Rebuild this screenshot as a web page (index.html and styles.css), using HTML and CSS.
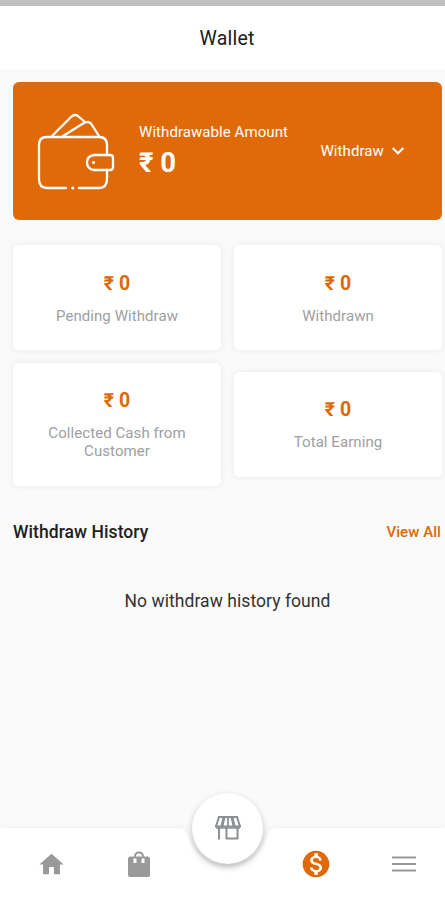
FILE: index.html
```html
<!DOCTYPE html>
<html lang="en">
<head>
<meta charset="utf-8">
<title>Wallet</title>
<link rel="stylesheet" href="styles.css">
</head>
<body>
<div class="app">
  <div class="status"></div>
  <header class="bar"><h1>Wallet</h1></header>
  <main class="content">
    <section class="hero">
      <svg class="wallet" width="78" height="78" viewBox="0 0 78 78" fill="none" stroke="#fff" stroke-width="2.3" stroke-linecap="round" stroke-linejoin="round">
        <path d="M29 75H10Q2 75 2 66V32Q2 24 9.500 24H62Q70 24 70 32V42"/>
        <path d="M70 57V66Q70 75 62 75H42"/>
        <path d="M57 42H73Q76 42 76 45V54Q76 57 73 57H57Q50 56 50 49.500Q50 43 57 42Z"/>
        <path d="M15 23L34 4Q37.500 .5 41 3L48 9M26 23L46 10.500Q52 7 55 12L62 23"/>
        <path d="M56.500 49.500h.1M35.700 75h.1" stroke-width="3"/>
      </svg>
      <div class="balance">
        <span class="balance-label">Withdrawable Amount</span>
        <strong class="balance-value">₹ 0</strong>
      </div>
      <div class="withdraw"><span>Withdraw</span>
        <svg width="12" height="8" viewBox="0 0 12 8" fill="none" stroke="#fff" stroke-width="2"><path d="M.7 1L6 6.300L11.300 1"/></svg>
      </div>
    </section>
    <section class="stats">
      <div class="card"><strong>₹ 0</strong><span>Pending Withdraw</span></div>
      <div class="card"><strong>₹ 0</strong><span>Withdrawn</span></div>
      <div class="card"><strong>₹ 0</strong><span>Collected Cash from<br>Customer</span></div>
      <div class="card"><strong>₹ 0</strong><span>Total Earning</span></div>
    </section>
    <div class="history"><h2>Withdraw History</h2><a>View All</a></div>
    <p class="empty">No withdraw history found</p>
  </main>
  <nav class="nav">
    <svg class="nav-shape" width="445" height="82" viewBox="0 0 445 82"><path d="M0 10H175C184 10 186 13 189 20C195 38 209 49 227.500 49S260 38 266 20C269 13 271 10 280 10H445V82H0Z" fill="#fff"/></svg>
    <div class="nav-items">
      <svg width="29" height="29" viewBox="0 0 24 24" fill="#999"><path d="M10 20v-6h4v6h5v-8h3L12 3 2 12h3v8z"/></svg>
      <svg class="bag" width="28" height="28" viewBox="0 0 28 28" fill="#999"><path fill-rule="evenodd" d="M5.500 6.500H9C9 3.500 11 1.500 14 1.500S19 3.500 19 6.500H22.500Q25 6.500 25 9V25Q25 27 23 27H5Q3 27 3 25V9Q3 6.500 5.500 6.500ZM10.800 6.500H17.200C17 4.500 16 3.500 14 3.500S11 4.500 10.800 6.500ZM8.500 8.500V13H11.500V8.500ZM16.500 8.500V13H19.500V8.500Z"/></svg>
      <span></span>
      <svg width="32" height="32" viewBox="0 0 24 24" fill="#e06a0a"><path d="M12 2C6.480 2 2 6.480 2 12s4.480 10 10 10 10-4.480 10-10S17.520 2 12 2zm1.410 16.090V20h-2.670v-1.930c-1.710-.36-3.160-1.460-3.270-3.400h1.960c.1 1.050.82 1.870 2.650 1.870 1.960 0 2.400-.98 2.400-1.590 0-.83-.44-1.610-2.670-2.140-2.480-.6-4.180-1.620-4.180-3.670 0-1.720 1.390-2.840 3.110-3.210V4h2.670v1.950c1.860.45 2.790 1.860 2.850 3.390H14.300c-.05-1.110-.64-1.870-2.220-1.870-1.500 0-2.400.68-2.400 1.640 0 .84.65 1.390 2.670 1.910s4.180 1.390 4.180 3.910c-.01 1.830-1.380 2.830-3.120 3.160z"/></svg>
      <svg width="24" height="18" viewBox="0 0 24 18" stroke="#999" stroke-width="2"><path d="M0 2.500H24M0 9H24M0 15.500H24"/></svg>
    </div>
    <div class="fab">
      <svg width="26" height="24" viewBox="0 0 26 24" fill="none" stroke="#8c9093" stroke-width="2"><path d="M4 1H22L25 10.500H1ZM4 11V23.500M11.500 11V22.500H22.500V11"/><path d="M9 1L7 10M17 1L19 10" stroke-width="3"/><path d="M13 1V10M1 12H25" stroke-width="1.700"/></svg>
    </div>
  </nav>
</div>
</body>
</html>
```
FILE: styles.css
```css
* { box-sizing: border-box; margin: 0; padding: 0; }
body { font-family: Roboto, sans-serif; color: #202020; background: #fafafa; }
.app { height: 900px; display: flex; flex-direction: column; overflow: hidden; }
.status { height: 6px; background: #c0c0c0; }
.bar { height: 63px; background: #fff; display: flex; align-items: center; justify-content: center; padding: 1px 0 0 9px; }
.bar h1 { font-size: 19.5px; font-weight: 400; letter-spacing: .2px; }
.content { flex: 1; padding: 12.5px 3px 0 13px; }
.hero { height: 138.5px; border-radius: 6px; background: #e06a0a; color: #fff; display: flex; align-items: center; padding: 0 37px 0 24px; }
.wallet { margin-top: 2px; }
.balance { margin-left: 24px; margin-top: 2px; display: flex; flex-direction: column; }
.balance-label { font-size: 15px; line-height: 20px; letter-spacing: .07px; white-space: nowrap; }
.balance-value { font-size: 27.5px; line-height: 36px; margin-top: 3px; }
.withdraw { margin-left: auto; display: flex; align-items: center; gap: 8px; font-size: 15px; letter-spacing: .1px; margin-right: 1px; }
.stats { margin-top: 25px; display: grid; grid-template-columns: 208px 208px; gap: 13px; align-items: center; }
.card { background: #fff; border-radius: 5px; box-shadow: 0 0 5px 1px #eee; display: flex; flex-direction: column; align-items: center; text-align: center; padding: 26px 10px; }
.card:nth-child(-n+2) { padding: 27px 10px 25px; }
.card strong { color: #dc6908; font-size: 19.5px; line-height: 24px; }
.card span { color: #a0a0a0; font-size: 15px; line-height: 18px; letter-spacing: .07px; margin-top: 11px; }
.history { display: flex; justify-content: space-between; align-items: center; margin-top: 34px; height: 24px; padding-right: 1px; }
.history h2 { font-size: 17.5px; font-weight: 500; letter-spacing: .07px; }
.history a { font-size: 15px; font-weight: 500; color: #dc6908; letter-spacing: .07px; }
.empty { text-align: center; margin-top: 45px; font-size: 17.5px; line-height: 24px; letter-spacing: .06px; color: #333; }
.nav { height: 82px; position: relative; }
.nav-shape { position: absolute; inset: 0; filter: drop-shadow(0 -1px 2px #f0f0f0); }
.nav-items { position: relative; height: 82px; padding-top: 10px; display: grid; grid-template-columns: 102px 75px 101px 75px 102px; align-items: center; justify-items: center; }
.nav-items .bag { margin-right: 1px; }
.nav-items svg:last-child { margin-right: 1px; }
.fab { position: absolute; left: 192px; top: -25px; width: 71px; height: 71px; border-radius: 50%; background: #fff; box-shadow: 0 3px 6px #bbb; display: flex; align-items: center; justify-content: center; }
.fab svg { margin-top: -2px; }
```
